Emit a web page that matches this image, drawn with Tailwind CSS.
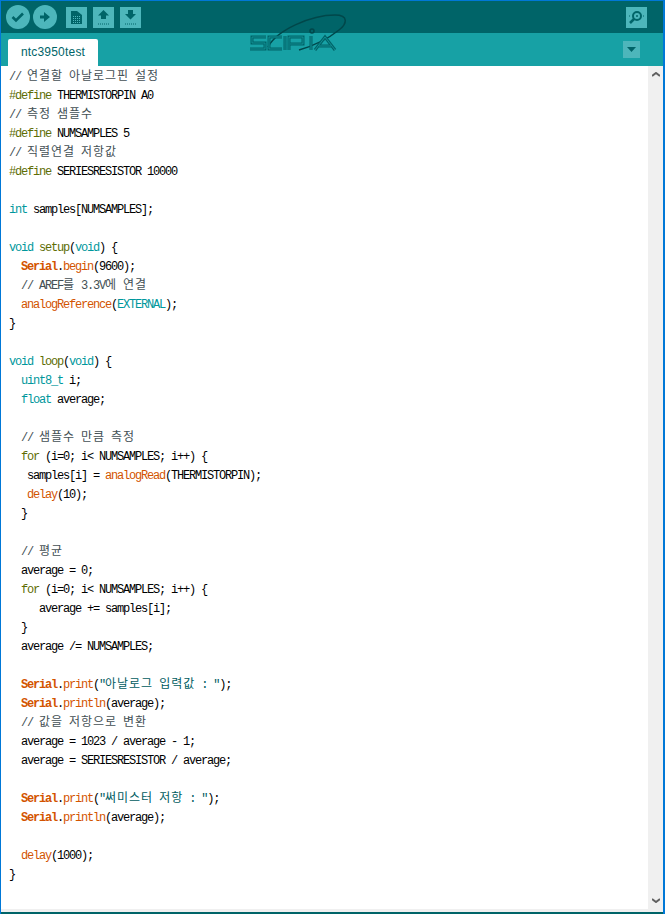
<!DOCTYPE html>
<html lang="ko">
<head>
    <meta charset="UTF-8">
    <title>ntc3950test</title>
    <script src="https://cdn.jsdelivr.net/npm/@tailwindcss/browser@4"></script>
</head>
<body class="h-[914px] w-[665px] overflow-hidden bg-[#0078d7] pl-px pr-[2px] pt-px">
    <div class="flex h-[913px] flex-col bg-[#006468]">
        <!-- toolbar -->
        <div class="flex h-[32px] items-center pl-[5px] pr-[16px]">
            <svg class="h-[24px] w-[24px]" viewBox="0 0 24 24"><circle cx="12" cy="12" r="12" fill="#4db6bb"/><path d="M6.500 12l3.500 3.500 7-7" fill="none" stroke="#006468" stroke-width="2.600"/></svg>
            <svg class="ml-[3px] h-[24px] w-[24px]" viewBox="0 0 24 24"><circle cx="12" cy="12" r="12" fill="#4db6bb"/><path d="M7 10.500h4V7l6 5-6 5v-3.500H7z" fill="#006468"/></svg>
            <div class="ml-[9px] flex h-[21px] w-[21px] items-center justify-center bg-[#4db6bb]">
                <svg class="h-[13px] w-[11px]" viewBox="0 0 11 13"><path d="M0 0h6l5 4v9H0z" fill="#006468"/><path d="M2 5.500h7M2 7.500h7M2 9.500h7M2 11.500h7" stroke="#4db6bb" stroke-dasharray="1 1"/></svg>
            </div>
            <div class="ml-[6px] flex h-[21px] w-[21px] items-end justify-center bg-[#4db6bb] pb-[3px]">
                <svg class="h-[15px] w-[13px]" viewBox="0 0 13 15"><path d="M6.500 0L12 5.500H9V9H4V5.500H1z" fill="#006468"/><path d="M1 14h11" stroke="#006468" stroke-dasharray="1 1"/></svg>
            </div>
            <div class="ml-[6px] flex h-[21px] w-[21px] items-end justify-center bg-[#4db6bb] pb-[3px]">
                <svg class="h-[15px] w-[13px]" viewBox="0 0 13 15"><path d="M4 0h5v4h3L6.500 9.500 1 4h3z" fill="#006468"/><path d="M1 14h11" stroke="#006468" stroke-dasharray="1 1"/></svg>
            </div>
            <div class="ml-auto flex h-[21px] w-[21px] items-center justify-center bg-[#4db6bb]">
                <svg class="h-[15px] w-[17px]" viewBox="0 0 17 15"><circle cx="9" cy="6" r="4" fill="none" stroke="#006468" stroke-width="2"/><circle cx="9" cy="6" r="1" fill="#006468"/><path d="M6 9l-4 4" stroke="#006468" stroke-width="2.500"/><path d="M1 6h1M15 6h1" stroke="#006468"/></svg>
            </div>
        </div>
        <!-- tab row -->
        <div class="relative flex h-[33px] items-end bg-[#17a1a5] pl-[7px] pr-[23px]">
            <div class="flex h-[27px] w-[90px] items-center justify-center rounded-t-[2px] bg-white pb-[2px] font-['Liberation_Sans',sans-serif] text-[12px] tracking-[0.2px] text-[#006468]">ntc3950test</div>
            <div class="mb-[8px] ml-auto flex h-[17px] w-[17px] items-center justify-center bg-[#4db6bb]">
                <svg class="h-[5px] w-[9px]" viewBox="0 0 9 5"><path d="M0 0h9L4.500 5z" fill="#006468"/></svg>
            </div>
            <!-- logo overlaps both bars -->
            <svg class="absolute left-[248px] top-[-19px] h-[40px] w-[100px]" viewBox="0 0 100 40" fill="none">
                <path d="M19 33C28 16 62 1 86 1c14 0 12 9 4 15-10 8-26 16-40 20" stroke="#00474a" stroke-width="1.500"/>
                <g stroke="#006468" stroke-width="3">
                    <path d="M17 23H3v6h13v6H1M33 23H20v12h13M36 22v14M40 36V23h14v7H41M62 22v14M66 36l10-13 10 13M70 32h12"/>
                </g>
                <g stroke="#17a1a5" stroke-width="1" opacity="0.7">
                    <path d="M17 23H3v6h13v6H1M33 23H20v12h13M36 22v14M40 36V23h14v7H41M62 22v14M66 36l10-13 10 13M70 32h12"/>
                </g>
                <circle cx="63" cy="17" r="2" stroke="#00474a" stroke-width="1.500"/>
            </svg>
        </div>
        <!-- editor -->
        <div class="flex h-[843px] bg-white">
            <pre class="flex-1 overflow-hidden pl-2 pt-[2px] font-['Liberation_Mono',monospace] text-[12px]/[19px] tracking-[-1.2px] text-black"><span class="text-[#434f54]">// <span class="font-['Noto_Sans_CJK_KR'] leading-[0px] tracking-[0.96px]">연결할</span> <span class="font-['Noto_Sans_CJK_KR'] leading-[0px] tracking-[0.96px]">아날로그핀</span> <span class="font-['Noto_Sans_CJK_KR'] leading-[0px] tracking-[0.96px]">설정</span></span>
<span class="text-[#5e6d03]">#define</span> THERMISTORPIN A0
<span class="text-[#434f54]">// <span class="font-['Noto_Sans_CJK_KR'] leading-[0px] tracking-[0.96px]">측정</span> <span class="font-['Noto_Sans_CJK_KR'] leading-[0px] tracking-[0.96px]">샘플수</span></span>
<span class="text-[#5e6d03]">#define</span> NUMSAMPLES 5
<span class="text-[#434f54]">// <span class="font-['Noto_Sans_CJK_KR'] leading-[0px] tracking-[0.96px]">직렬연결</span> <span class="font-['Noto_Sans_CJK_KR'] leading-[0px] tracking-[0.96px]">저항값</span></span>
<span class="text-[#5e6d03]">#define</span> SERIESRESISTOR 10000

<span class="text-[#00979c]">int</span> samples[NUMSAMPLES];

<span class="text-[#00979c]">void</span> <span class="text-[#5e6d03]">setup</span>(<span class="text-[#00979c]">void</span>) {
  <span class="font-bold text-[#d35400]">Serial</span>.<span class="text-[#d35400]">begin</span>(9600);
  <span class="text-[#434f54]">// AREF<span class="font-['Noto_Sans_CJK_KR'] leading-[0px] tracking-[0.96px]">를</span> 3.3V<span class="font-['Noto_Sans_CJK_KR'] leading-[0px] tracking-[0.96px]">에</span> <span class="font-['Noto_Sans_CJK_KR'] leading-[0px] tracking-[0.96px]">연결</span></span>
  <span class="text-[#d35400]">analogReference</span>(<span class="text-[#00979c]">EXTERNAL</span>);
}

<span class="text-[#00979c]">void</span> <span class="text-[#5e6d03]">loop</span>(<span class="text-[#00979c]">void</span>) {
  <span class="text-[#00979c]">uint8_t</span> i;
  <span class="text-[#00979c]">float</span> average;

  <span class="text-[#434f54]">// <span class="font-['Noto_Sans_CJK_KR'] leading-[0px] tracking-[0.96px]">샘플수</span> <span class="font-['Noto_Sans_CJK_KR'] leading-[0px] tracking-[0.96px]">만큼</span> <span class="font-['Noto_Sans_CJK_KR'] leading-[0px] tracking-[0.96px]">측정</span></span>
  <span class="text-[#5e6d03]">for</span> (i=0; i&lt; NUMSAMPLES; i++) {
   samples[i] = <span class="text-[#d35400]">analogRead</span>(THERMISTORPIN);
   <span class="text-[#d35400]">delay</span>(10);
  }

  <span class="text-[#434f54]">// <span class="font-['Noto_Sans_CJK_KR'] leading-[0px] tracking-[0.96px]">평균</span></span>
  average = 0;
  <span class="text-[#5e6d03]">for</span> (i=0; i&lt; NUMSAMPLES; i++) {
     average += samples[i];
  }
  average /= NUMSAMPLES;

  <span class="font-bold text-[#d35400]">Serial</span>.<span class="text-[#d35400]">print</span>(<span class="text-[#005c5f]">"<span class="font-['Noto_Sans_CJK_KR'] leading-[0px] tracking-[0.96px]">아날로그</span> <span class="font-['Noto_Sans_CJK_KR'] leading-[0px] tracking-[0.96px]">입력값</span> : "</span>);
  <span class="font-bold text-[#d35400]">Serial</span>.<span class="text-[#d35400]">println</span>(average);
  <span class="text-[#434f54]">// <span class="font-['Noto_Sans_CJK_KR'] leading-[0px] tracking-[0.96px]">값을</span> <span class="font-['Noto_Sans_CJK_KR'] leading-[0px] tracking-[0.96px]">저항으로</span> <span class="font-['Noto_Sans_CJK_KR'] leading-[0px] tracking-[0.96px]">변환</span></span>
  average = 1023 / average - 1;
  average = SERIESRESISTOR / average;

  <span class="font-bold text-[#d35400]">Serial</span>.<span class="text-[#d35400]">print</span>(<span class="text-[#005c5f]">"<span class="font-['Noto_Sans_CJK_KR'] leading-[0px] tracking-[0.96px]">써미스터</span> <span class="font-['Noto_Sans_CJK_KR'] leading-[0px] tracking-[0.96px]">저항</span> : "</span>);
  <span class="font-bold text-[#d35400]">Serial</span>.<span class="text-[#d35400]">println</span>(average);

  <span class="text-[#d35400]">delay</span>(1000);
}</pre>
            <!-- scrollbar -->
            <div class="flex w-[15px] flex-col items-center justify-between bg-[#f0f0f0] py-[6px]">
                <svg class="h-[5px] w-[8px]" viewBox="0 0 8 5"><path d="M0 4l4-3 4 3" fill="none" stroke="#606060" stroke-width="2"/></svg>
                <svg class="h-[5px] w-[8px]" viewBox="0 0 8 5"><path d="M0 1l4 3 4-3" fill="none" stroke="#606060" stroke-width="2"/></svg>
            </div>
        </div>
        <div class="h-[3px] bg-[#f0f0f0]"></div>
    </div>
</body>
</html>
